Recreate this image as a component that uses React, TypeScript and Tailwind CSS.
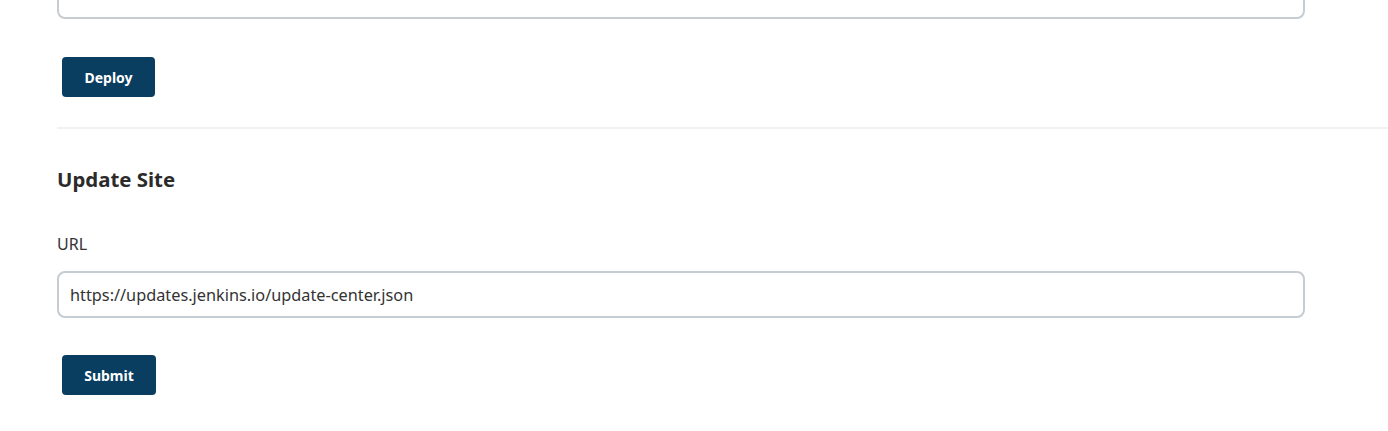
import React from "react";

const App = () => {
  return (
    <div
      className="h-[431px] w-full overflow-hidden bg-white text-[#333]"
      style={{ fontFamily: '"Noto Sans", "Open Sans", sans-serif' }}
    >
      <div className="pl-[57px]">
        {/* Previous section (cut off) */}
        <div className="w-[1248px]">
          <div className="mt-[-28px] h-[47px] rounded-lg border-2 border-[#c5ccd2] bg-white" />
          <button className="ml-[5px] mt-[38px] h-[40px] w-[93px] rounded-[4px] bg-[#093e61] text-[14px] font-bold text-white">
            Deploy
          </button>
        </div>

        <div className="mt-[30px] h-[2px] bg-[#f1f1f1]" />

        {/* Update Site */}
        <div className="w-[1248px]">
          <h2 className="mt-[36px] text-[20.4px] font-bold leading-[28px] text-[#2b2b2b]">
            Update Site
          </h2>
          <label className="mt-[40px] block text-[16px] leading-[22px]">URL</label>
          <input
            readOnly
            value="https://updates.jenkins.io/update-center.json"
            className="mt-[16px] block h-[47px] w-full rounded-lg border-2 border-[#c5ccd2] bg-white px-[11px] text-[16.3px] text-[#333] outline-none"
          />
          <button className="ml-[5px] mt-[37px] h-[40px] w-[94px] rounded-[4px] bg-[#093e61] text-[14px] font-bold text-white">
            Submit
          </button>
        </div>
      </div>
    </div>
  );
};

export default App;
